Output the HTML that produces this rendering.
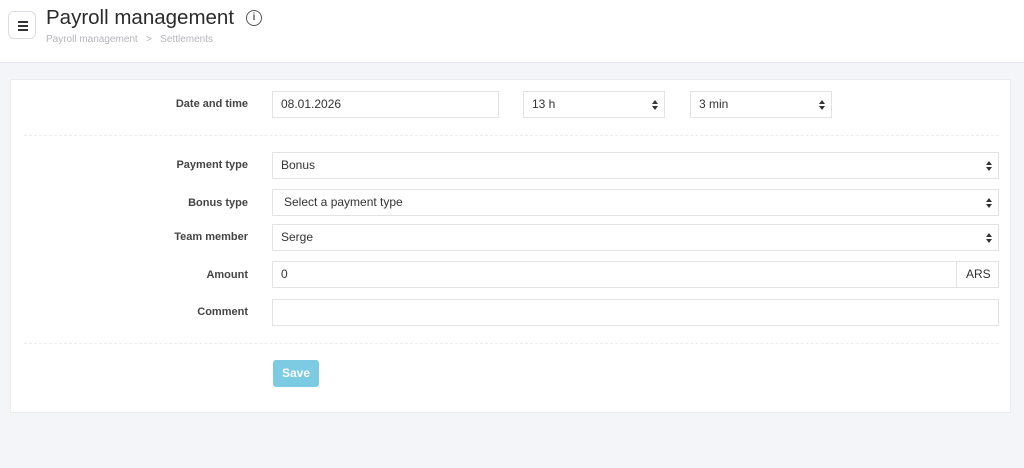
<!DOCTYPE html>
<html><head><style>
*{box-sizing:border-box;margin:0;padding:0}
body{width:1024px;height:468px;background:#f4f5f9;font-family:"Liberation Sans",sans-serif;position:relative;overflow:hidden}
.hdr{position:absolute;left:0;top:0;width:1024px;height:63px;background:#fff;border-bottom:1px solid #e6e7ec}
.menu{position:absolute;left:8px;top:11px;width:28px;height:28px;border:1px solid #dcdde3;border-radius:6px;background:#fff}
.menu i{position:absolute;left:9px;width:10px;height:2px;background:#333}
h1{position:absolute;left:46px;top:6px;font-size:20.5px;font-weight:normal;color:#2b2b2b}
.info{position:absolute;left:246px;top:10px;width:16px;height:16px;border:1.5px solid #555;border-radius:50%;font-size:10px;text-align:center;line-height:13px;color:#555;font-weight:bold}
.bc{position:absolute;left:46px;top:34px;font-size:10px;color:#b5b6bb}
.card{position:absolute;left:10px;top:79px;width:1001px;height:334px;background:#fff;border:1px solid #ececf0}
.lbl{position:absolute;width:238px;text-align:right;font-size:11px;font-weight:bold;color:#444;left:10px}
.in{position:absolute;height:27px;border:1px solid #e3e3e6;font-size:12px;color:#333;padding-left:8px;line-height:25px;background:#fff}
.in.s::after{content:"";position:absolute;right:6px;top:8px;border:3px solid transparent;border-bottom:4px solid #333;border-top:0;}
.in.s::before{content:"";position:absolute;right:6px;top:14px;border:3px solid transparent;border-top:4px solid #333;border-bottom:0;}
.hr{position:absolute;left:24px;width:975px;border-top:1px dashed #ececef}
.btn{position:absolute;left:273px;top:360px;width:46px;height:27px;background:#7ccbe3;border-radius:3px;color:#fff;font-size:12px;font-weight:bold;text-align:center;line-height:27px}
</style></head><body>
<div class="hdr">
<div class="menu"><i style="top:9px"></i><i style="top:13px"></i><i style="top:17px"></i></div>
<h1>Payroll management</h1>
<div class="info">i</div>
<div class="bc">Payroll management &nbsp;&nbsp;&gt;&nbsp;&nbsp; Settlements</div>
</div>
<div class="card"></div>
<div class="lbl" style="top:98px">Date and time</div>
<div class="in" style="left:272px;top:91px;width:227px">08.01.2026</div>
<div class="in s" style="left:523px;top:91px;width:142px">13 h</div>
<div class="in s" style="left:690px;top:91px;width:142px">3 min</div>
<div class="hr" style="top:135px"></div>
<div class="lbl" style="top:159px">Payment type</div>
<div class="in s" style="left:272px;top:152px;width:727px">Bonus</div>
<div class="lbl" style="top:197px">Bonus type</div>
<div class="in s" style="left:272px;top:189px;width:727px;padding-left:11px">Select a payment type</div>
<div class="lbl" style="top:231px">Team member</div>
<div class="in s" style="left:272px;top:224px;width:727px">Serge</div>
<div class="lbl" style="top:269px">Amount</div>
<div class="in" style="left:272px;top:261px;width:685px">0</div>
<div class="in" style="left:956px;top:261px;width:43px;padding-left:9px">ARS</div>
<div class="lbl" style="top:306px">Comment</div>
<div class="in" style="left:272px;top:299px;width:727px"></div>
<div class="hr" style="top:343px"></div>
<div class="btn">Save</div>
</body></html>
